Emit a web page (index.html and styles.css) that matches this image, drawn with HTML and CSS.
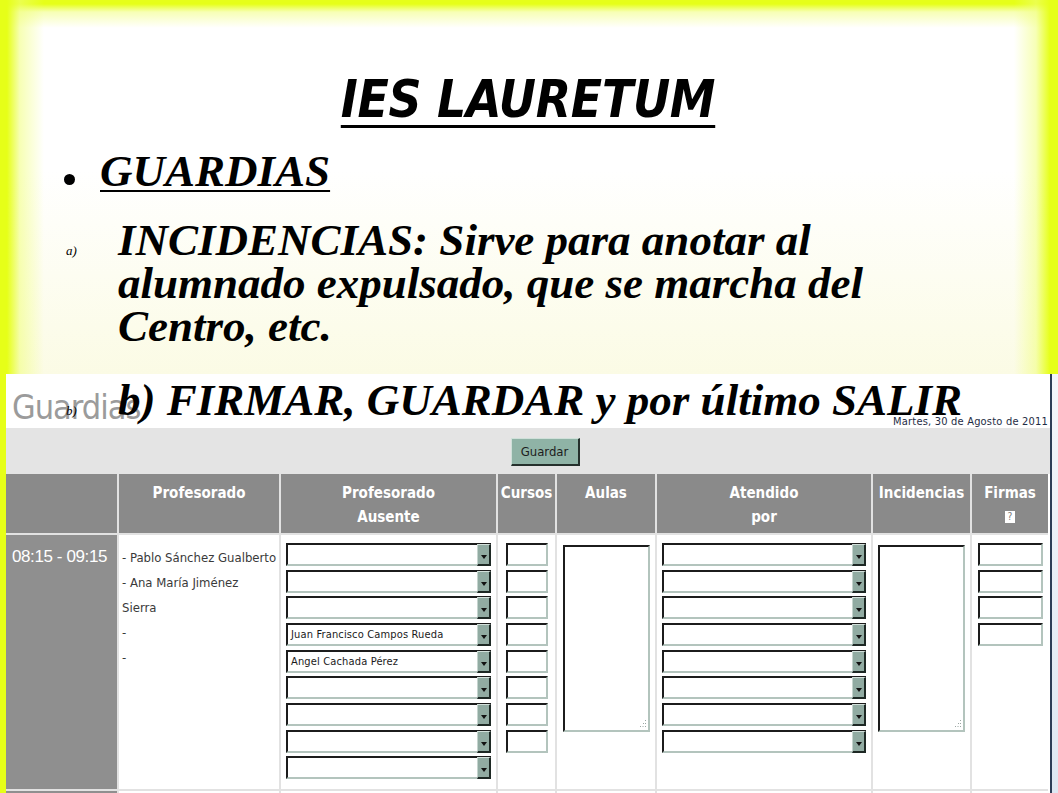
FILE: index.html
```html
<!DOCTYPE html>
<html lang="es">
<head>
<meta charset="utf-8">
<title>IES LAURETUM - Guardias</title>
<link rel="stylesheet" href="styles.css">
</head>
<body>
<div class="slide">
  <div class="content">
    <h1 class="title"><span class="title-text">IES LAURETUM</span></h1>
    <ul class="points">
      <li class="point point-dot"><span class="dot"></span><span class="u">GUARDIAS</span></li>
      <li class="point point-alpha first"><span class="mark">a)</span><span class="ptext">INCIDENCIAS: Sirve para anotar al<br>alumnado expulsado, que se marcha del<br>Centro, etc.</span></li>
      <li class="point point-alpha second"><span class="mark">b)</span><span class="ptext">b) FIRMAR, GUARDAR y por último SALIR</span></li>
    </ul>
  </div>

  <div class="shot">
    <div class="shot-main">
      <div class="shot-head">
        <span class="shot-title">Guardias</span>
        <span class="shot-date">Martes, 30 de Agosto de 2011</span>
      </div>
      <div class="shot-bar"><span class="btn-guardar">Guardar</span></div>
      <div class="grid">
        <div class="th"></div>
        <div class="th">Profesorado</div>
        <div class="th">Profesorado<br>Ausente</div>
        <div class="th">Cursos</div>
        <div class="th">Aulas</div>
        <div class="th">Atendido<br>por</div>
        <div class="th">Incidencias</div>
        <div class="th">Firmas<br><span class="help">?</span></div>

        <div class="td time">08:15 - 09:15</div>
        <div class="td names">
          <div>- Pablo Sánchez Gualberto</div>
          <div>- Ana María Jiménez</div>
          <div>Sierra</div>
          <div>-</div>
          <div>-</div>
        </div>
        <div class="td stack">
          <div class="sel w-aus"><span class="sel-text"></span><span class="sel-btn"></span></div>
          <div class="sel w-aus"><span class="sel-text"></span><span class="sel-btn"></span></div>
          <div class="sel w-aus"><span class="sel-text"></span><span class="sel-btn"></span></div>
          <div class="sel w-aus"><span class="sel-text">Juan Francisco Campos Rueda</span><span class="sel-btn"></span></div>
          <div class="sel w-aus"><span class="sel-text">Angel Cachada Pérez</span><span class="sel-btn"></span></div>
          <div class="sel w-aus"><span class="sel-text"></span><span class="sel-btn"></span></div>
          <div class="sel w-aus"><span class="sel-text"></span><span class="sel-btn"></span></div>
          <div class="sel w-aus"><span class="sel-text"></span><span class="sel-btn"></span></div>
          <div class="sel w-aus"><span class="sel-text"></span><span class="sel-btn"></span></div>
        </div>
        <div class="td stack">
          <div class="inp w-cur"></div>
          <div class="inp w-cur"></div>
          <div class="inp w-cur"></div>
          <div class="inp w-cur"></div>
          <div class="inp w-cur"></div>
          <div class="inp w-cur"></div>
          <div class="inp w-cur"></div>
          <div class="inp w-cur"></div>
        </div>
        <div class="td stack tpad">
          <div class="area"><svg class="grip" width="10" height="10" viewBox="0 0 10 10"><g fill="#9aa6a2"><rect x="8" y="1" width="1" height="1"/><rect x="6" y="4" width="1" height="1"/><rect x="8" y="4" width="1" height="1"/><rect x="3" y="7" width="1" height="1"/><rect x="5.5" y="7" width="1" height="1"/><rect x="8" y="7" width="1" height="1"/></g></svg></div>
        </div>
        <div class="td stack">
          <div class="sel w-ate"><span class="sel-text"></span><span class="sel-btn"></span></div>
          <div class="sel w-ate"><span class="sel-text"></span><span class="sel-btn"></span></div>
          <div class="sel w-ate"><span class="sel-text"></span><span class="sel-btn"></span></div>
          <div class="sel w-ate"><span class="sel-text"></span><span class="sel-btn"></span></div>
          <div class="sel w-ate"><span class="sel-text"></span><span class="sel-btn"></span></div>
          <div class="sel w-ate"><span class="sel-text"></span><span class="sel-btn"></span></div>
          <div class="sel w-ate"><span class="sel-text"></span><span class="sel-btn"></span></div>
          <div class="sel w-ate"><span class="sel-text"></span><span class="sel-btn"></span></div>
        </div>
        <div class="td stack tpad">
          <div class="area"><svg class="grip" width="10" height="10" viewBox="0 0 10 10"><g fill="#9aa6a2"><rect x="8" y="1" width="1" height="1"/><rect x="6" y="4" width="1" height="1"/><rect x="8" y="4" width="1" height="1"/><rect x="3" y="7" width="1" height="1"/><rect x="5.5" y="7" width="1" height="1"/><rect x="8" y="7" width="1" height="1"/></g></svg></div>
        </div>
        <div class="td stack">
          <div class="inp w-fir"></div>
          <div class="inp w-fir"></div>
          <div class="inp w-fir"></div>
          <div class="inp w-fir"></div>
        </div>

        <div class="td time"></div>
        <div class="td"></div>
        <div class="td"></div>
        <div class="td"></div>
        <div class="td"></div>
        <div class="td"></div>
        <div class="td"></div>
        <div class="td"></div>
      </div>
    </div>
    <div class="shot-frame"></div>
    <div class="shot-side"></div>
  </div>
</div>
</body>
</html>
```

FILE: styles.css
```css
html, body {
  margin: 0;
  padding: 0;
}

body {
  width: 1058px;
  height: 793px;
  overflow: hidden;
  background: #e8ff1e;
}

.slide {
  position: relative;
  width: 1058px;
  height: 793px;
  overflow: hidden;
  background:
    linear-gradient(to right, #e6ff18 0, #e6ff18 7px, rgba(240, 255, 120, 0.55) 20px, rgba(255, 255, 255, 0) 44px),
    linear-gradient(to left, #e6ff18 0, #e6ff18 8px, rgba(240, 255, 120, 0.55) 22px, rgba(255, 255, 255, 0) 44px),
    linear-gradient(to bottom, #e6ff18 0, #e6ff18 4px, rgba(240, 255, 120, 0.55) 12px, rgba(255, 255, 255, 0) 28px),
    linear-gradient(to bottom, #ffffff 0, #ffffff 170px, #fbfbe4 380px);
}

/* ---------- slide text ---------- */
.content {
  position: relative;
  z-index: 2;
  padding-top: 74px;
}

.title {
  margin: 0;
  text-align: center;
  font-family: "DejaVu Sans Condensed", "DejaVu Sans", sans-serif;
  font-stretch: condensed;
  font-weight: bold;
  font-style: oblique;
  font-size: 51px;
  line-height: 52px;
  color: #000;
  letter-spacing: -0.3px;
  padding-right: 2px;
}

.title-text {
  text-decoration: underline;
  text-decoration-thickness: 3px;
  text-underline-offset: 8px;
}

.points {
  list-style: none;
  margin: 24px 0 0 0;
  padding: 0;
  font-family: "Liberation Serif", "DejaVu Serif", serif;
  font-weight: bold;
  font-style: italic;
  font-size: 45px;
  line-height: 43px;
  color: #000;
}

.point {
  display: flex;
  align-items: flex-start;
}

.point-dot {
  padding-left: 64px;
}

.dot {
  width: 11px;
  height: 11px;
  border-radius: 50%;
  background: #000;
  margin-top: 24px;
  margin-right: 25px;
  flex: none;
}

.u {
  text-decoration: underline;
  text-decoration-thickness: 2px;
  text-underline-offset: 4px;
}

.point-alpha {
  padding-left: 66px;
}

.point-alpha.first {
  margin-top: 26px;
}

.point-alpha.second {
  margin-top: 31px;
}

.mark {
  width: 52px;
  flex: none;
  font-size: 13px;
  line-height: 13px;
  font-weight: normal;
  padding-top: 25px;
}

.ptext {
  display: block;
}

/* ---------- screenshot ---------- */
.shot {
  position: absolute;
  z-index: 1;
  left: 6px;
  top: 374px;
  width: 1052px;
  height: 419px;
  overflow: hidden;
  display: flex;
}

.shot-main {
  width: 1044px;
  background: #fff;
  flex: none;
}

.shot-frame {
  width: 2px;
  flex: none;
  background: #2c3d57;
}

.shot-side {
  flex: 1;
  background: linear-gradient(to bottom, #f3f6fb, #dde7f2);
}

.shot-head {
  height: 54px;
  display: flex;
  justify-content: space-between;
  align-items: flex-end;
  padding: 0 2px 0 6px;
  font-family: "DejaVu Sans Condensed", "DejaVu Sans", sans-serif;
  font-stretch: condensed;
}

.shot-title {
  font-size: 34px;
  line-height: 40px;
  color: #9b9b9b;
  letter-spacing: -1px;
  padding-bottom: 1px;
}

.shot-date {
  font-size: 11px;
  line-height: 13px;
  color: #1e2c45;
  letter-spacing: 0.2px;
  padding-bottom: 0;
}

.shot-bar {
  height: 46px;
  background: #e4e4e4;
  display: flex;
  justify-content: center;
  align-items: center;
  padding-left: 34px;
  box-sizing: border-box;
}

.btn-guardar {
  box-sizing: border-box;
  width: 69px;
  height: 28px;
  display: flex;
  align-items: center;
  justify-content: center;
  background: #8fb3a6;
  border-top: 1px solid #cfe0d9;
  border-left: 1px solid #cfe0d9;
  border-right: 2px solid #25302c;
  border-bottom: 2px solid #25302c;
  font-family: "DejaVu Sans Condensed", "DejaVu Sans", sans-serif;
  font-stretch: condensed;
  font-size: 13px;
  color: #1d1d1d;
  margin-top: 2px;
}

.grid {
  display: grid;
  grid-template-columns: 111px 160px 215px 57px 98px 214px 97px 76px;
  grid-template-rows: 59px 254px 80px;
  column-gap: 2px;
  row-gap: 2px;
  width: 1042px;
  background: #e2e2e2;
}

.th {
  background: #8a8a8a;
  color: #fff;
  text-align: center;
  font-family: "DejaVu Sans Condensed", "DejaVu Sans", sans-serif;
  font-stretch: condensed;
  font-weight: bold;
  font-size: 15px;
  line-height: 24px;
  padding-top: 7px;
}

.help {
  display: inline-block;
  width: 10px;
  height: 12px;
  background: #fff;
  color: #7a7a7a;
  font-size: 10px;
  line-height: 12px;
  font-weight: normal;
  vertical-align: middle;
  margin-top: -2px;
}

.td {
  background: #fff;
}

.td.time {
  background: #8f8f8f;
  color: #fff;
  font-family: "Liberation Sans", Arial, sans-serif;
  font-size: 17px;
  line-height: 20px;
  letter-spacing: -0.4px;
  padding: 12px 0 0 6px;
}

.names {
  font-family: "DejaVu Sans Condensed", "DejaVu Sans", sans-serif;
  font-stretch: condensed;
  font-size: 13px;
  line-height: 25px;
  color: #3a3a3a;
  padding: 10px 0 0 3px;
}

.stack {
  display: flex;
  flex-direction: column;
  align-items: center;
  gap: 3.67px;
  padding-top: 8px;
}

.stack.tpad {
  padding-top: 10px;
}

.sel {
  box-sizing: border-box;
  height: 23px;
  display: flex;
  background: #fff;
  border-top: 2px solid #1c1c1c;
  border-left: 2px solid #1c1c1c;
  border-bottom: 2px solid #b3c4bd;
  flex: none;
}

.w-aus { width: 205px; }
.w-ate { width: 204px; }

.sel-text {
  flex: 1;
  font-family: "DejaVu Sans Condensed", "DejaVu Sans", sans-serif;
  font-stretch: condensed;
  font-size: 11px;
  letter-spacing: 0.15px;
  line-height: 19px;
  color: #1a1a1a;
  padding-left: 3px;
  white-space: nowrap;
  overflow: hidden;
}

.sel-btn {
  position: relative;
  box-sizing: border-box;
  width: 14px;
  margin-top: -1px;
  margin-bottom: -2px;
  background: #91aba2;
  border-top: 1px solid #d3e0db;
  border-left: 1px solid #c5d4ce;
  border-right: 2px solid #1d2824;
  border-bottom: 2px solid #1d2824;
  flex: none;
}

.sel-btn::after {
  content: "";
  position: absolute;
  left: 3px;
  top: 10px;
  border-left: 3px solid transparent;
  border-right: 3px solid transparent;
  border-top: 4px solid #111;
}

.inp {
  box-sizing: border-box;
  height: 23px;
  background: #fff;
  border-top: 2px solid #1c1c1c;
  border-left: 2px solid #1c1c1c;
  border-bottom: 2px solid #b3c4bd;
  border-right: 2px solid #b3c4bd;
  flex: none;
}

.w-cur { width: 42px; }
.w-fir { width: 65px; }

.area {
  position: relative;
  box-sizing: border-box;
  width: 87px;
  height: 187px;
  background: #fff;
  border-top: 2px solid #1c1c1c;
  border-left: 2px solid #1c1c1c;
  border-bottom: 2px solid #b3c4bd;
  border-right: 2px solid #b3c4bd;
}

.grip {
  position: absolute;
  right: 1px;
  bottom: 1px;
}
```
